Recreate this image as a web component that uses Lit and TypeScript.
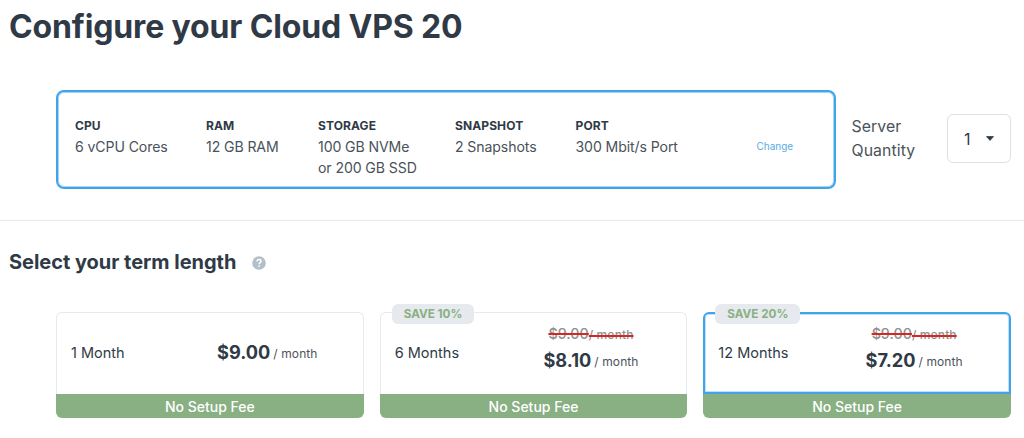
import { LitElement, html, css, nothing } from 'lit';
import { customElement, property } from 'lit/decorators.js';

interface Term {
  label: string;
  price: string;
  oldPrice?: string;
  save?: string;
  selected?: boolean;
}

const SPECS = [
  { name: 'CPU', lines: ['6 vCPU Cores'] },
  { name: 'RAM', lines: ['12 GB RAM'] },
  { name: 'STORAGE', lines: ['100 GB NVMe', 'or 200 GB SSD'] },
  { name: 'SNAPSHOT', lines: ['2 Snapshots'] },
  { name: 'PORT', lines: ['300 Mbit/s Port'] },
];

const TERMS: Term[] = [
  { label: '1 Month', price: '$9.00' },
  { label: '6 Months', price: '$8.10', oldPrice: '$9.00', save: 'SAVE 10%' },
  { label: '12 Months', price: '$7.20', oldPrice: '$9.00', save: 'SAVE 20%', selected: true },
];

@customElement('term-card')
export class TermCard extends LitElement {
  @property({ attribute: false }) term!: Term;

  static styles = css`
    :host {
      display: block;
      position: relative;
    }

    .body {
      box-sizing: border-box;
      height: 82px;
      display: grid;
      grid-template-columns: 113px 1fr;
      align-items: center;
      padding: 0 0 0 14px;
      border: 1px solid #e6e9ef;
      border-bottom: 0;
      border-radius: 6px 6px 0 0;
    }

    .selected {
      border: 2px solid #3fa4e8;
      box-shadow: inset 0 0 0 1px #bfe0f8;
      padding-left: 13px;
    }

    .label {
      font-size: 14.5px;
      white-space: nowrap;
      line-height: 18px;
      padding-bottom: 1px;
    }

    .prices {
      display: flex;
      flex-direction: column;
      align-items: center;
      padding-right: 12px;
    }

    .old {
      font-size: 14.3px;
      line-height: 20px;
      font-weight: 500;
      color: #8e9092;
      text-decoration: line-through;
      text-decoration-color: #d5281e;
      text-decoration-thickness: 1.5px;
      margin-top: -5px;
    }

    .selected .old {
      margin-top: -4px;
    }

    .old .per {
      font-weight: 500;
      margin-left: 0;
      color: inherit;
      letter-spacing: 0.1px;
    }

    .price {
      font-size: 18.2px;
      line-height: 31px;
      font-weight: 700;
      white-space: nowrap;
    }

    .per {
      font-size: 12px;
      font-weight: 400;
      letter-spacing: 0.1px;
      margin-left: 3px;
      color: #4b535b;
    }

    .price .per {
      position: relative;
      top: -1px;
    }

    .fee {
      height: 24px;
      line-height: 25px;
      text-align: center;
      font-size: 14px;
      font-weight: 500;
      color: #fff;
      background: #89b083;
      border-radius: 0 0 6px 6px;
    }

    .badge {
      position: absolute;
      top: -8px;
      left: 12px;
      height: 20px;
      line-height: 20px;
      padding: 0 12px;
      border-radius: 6px;
      background: #e6e9ee;
      color: #89b083;
      font-size: 11.7px;
      font-weight: 700;
    }
  `;

  render() {
    const { label, price, oldPrice, save, selected } = this.term;
    return html`
      <div class="body ${selected ? 'selected' : ''}">
        <span class="label">${label}</span>
        <div class="prices">
          ${oldPrice ? html`<div class="old">${oldPrice}<span class="per">/ month</span></div>` : nothing}
          <div class="price">${price}<span class="per">/ month</span></div>
        </div>
      </div>
      <div class="fee">No Setup Fee</div>
      ${save ? html`<div class="badge">${save}</div>` : nothing}
    `;
  }
}

@customElement('app-root')
export class AppRoot extends LitElement {
  static styles = css`
    :host {
      display: block;
      height: 438px;
      overflow: hidden;
      background: #fff;
      color: #2f3a46;
      font-family: Inter, sans-serif;
    }

    h1 {
      margin: 0;
      padding: 7px 9px 0;
      font-size: 32px;
      line-height: 40px;
      font-weight: 700;
      letter-spacing: -0.14px;
    }

    .config {
      display: flex;
      align-items: center;
      height: 99px;
      margin: 43px 13px 31px 56px;
    }

    .specs {
      box-sizing: border-box;
      width: 780px;
      height: 99px;
      display: grid;
      grid-template-columns: 131px 112px 137px 120.5px 181px auto;
      padding: 25px 0 0 17px;
      border: 2px solid #3fa4e8;
      border-radius: 8px;
      box-shadow: inset 0 0 0 1px #a5d4f5;
    }

    .name {
      font-size: 12px;
      line-height: 17px;
      font-weight: 700;
      letter-spacing: 0.1px;
    }

    .value {
      margin-top: 3px;
      font-size: 14.1px;
      line-height: 20.5px;
      letter-spacing: -0.1px;
      color: #4a525a;
    }

    .change {
      padding-top: 19px;
      font-size: 10px;
      line-height: 21px;
      color: #5aace4;
    }

    .quantity {
      flex: 1;
      padding: 0 0 1px 15.5px;
      font-size: 15.8px;
      line-height: 24px;
      letter-spacing: 0.1px;
      color: #4a525a;
    }

    .select {
      box-sizing: border-box;
      width: 64px;
      height: 49px;
      display: flex;
      align-items: center;
      gap: 15px;
      padding-left: 16px;
      margin-bottom: 2px;
      border: 1px solid #dedfe1;
      border-radius: 6px;
      font-size: 16px;
    }

    .divider {
      height: 1px;
      background: #e9eaed;
    }

    .heading {
      display: flex;
      align-items: center;
      gap: 16px;
      padding: 26px 9px 0;
      height: 30px;
    }

    h2 {
      margin: 0;
      font-size: 20px;
      line-height: 30px;
      font-weight: 700;
      letter-spacing: -0.03px;
    }

    .help {
      margin-top: 1px;
    }

    .terms {
      display: grid;
      grid-template-columns: repeat(3, 1fr);
      gap: 16px;
      margin: 35px 13px 0 56px;
    }
  `;

  render() {
    return html`
      <h1>Configure your Cloud VPS 20</h1>
      <div class="config">
        <div class="specs">
          ${SPECS.map(
            (spec) => html`
              <div>
                <div class="name">${spec.name}</div>
                <div class="value">${spec.lines.map((line) => html`<div>${line}</div>`)}</div>
              </div>
            `
          )}
          <div class="change">Change</div>
        </div>
        <div class="quantity">Server<br />Quantity</div>
        <div class="select">
          <span>1</span>
          <svg width="8" height="5" viewBox="0 0 8 5">
            <path d="M0.5 0.6h7L4 4.4z" fill="#2f3a46" stroke="#2f3a46" stroke-width="0.8" stroke-linejoin="round" />
          </svg>
        </div>
      </div>
      <div class="divider"></div>
      <div class="heading">
        <h2>Select your term length</h2>
        <svg class="help" width="14" height="14" viewBox="0 0 14 14">
          <circle cx="7" cy="7" r="6.8" fill="#b3bfca" />
          <path d="M5 5.5C5.1 4.1 6 3.6 7 3.6c1.2 0 2 .7 2 1.7C9 6.7 7.1 6.6 7.1 8.2" fill="none" stroke="#fff" stroke-width="1.5" />
          <circle cx="7.1" cy="10.1" r="0.9" fill="#fff" />
        </svg>
      </div>
      <div class="terms">${TERMS.map((term) => html`<term-card .term=${term}></term-card>`)}</div>
    `;
  }
}
